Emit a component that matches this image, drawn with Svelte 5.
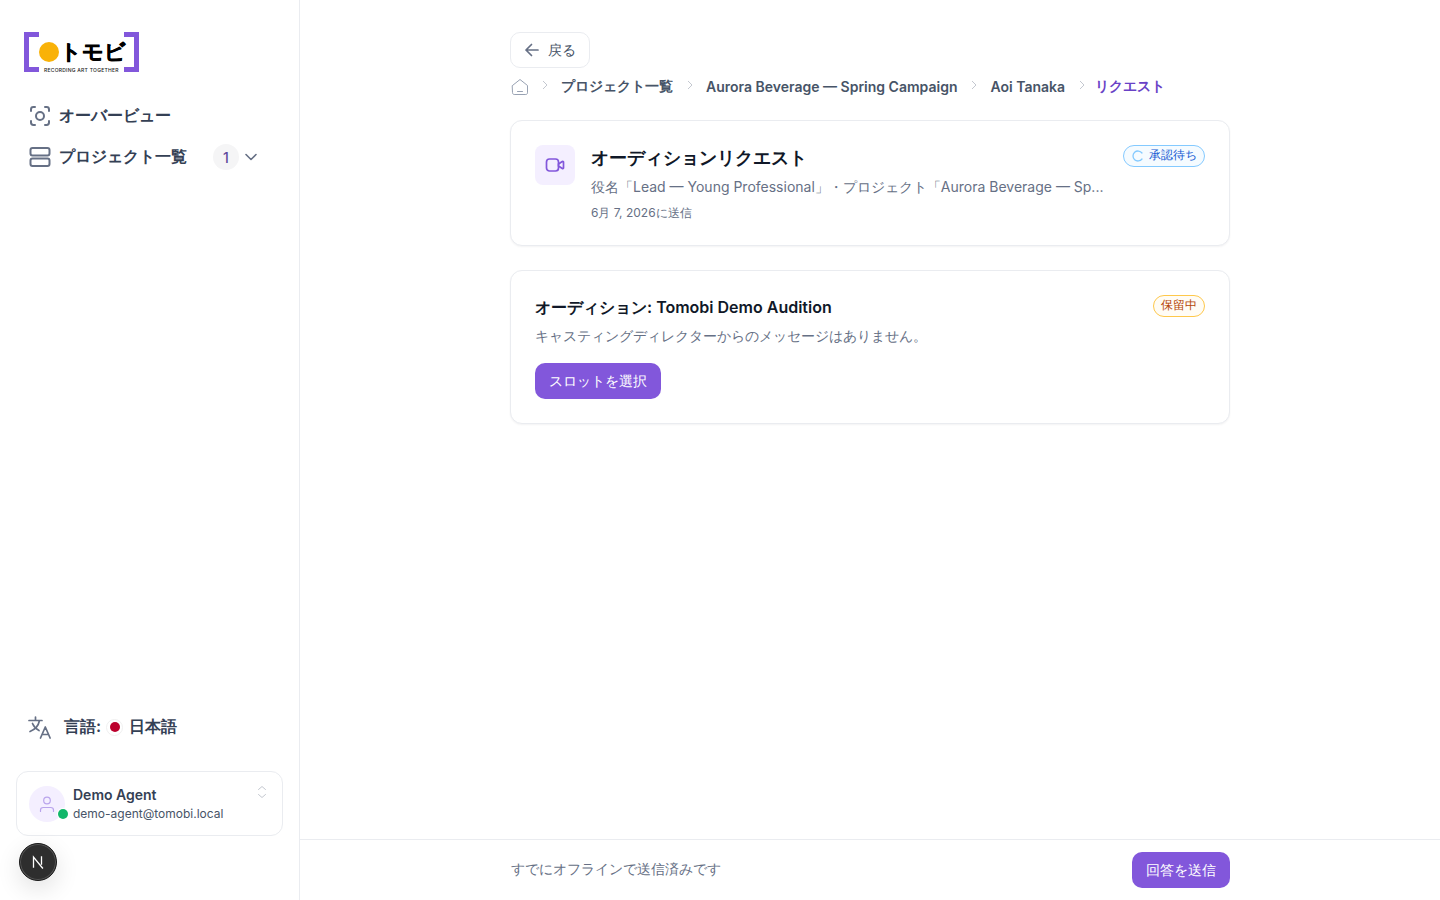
<script>
  let projectCount = 1;
</script>

<div class="layout" lang="ja">
  <aside class="sidebar">
    <div class="logo">
      <span class="bracket left"></span>
      <span class="dot"></span>
      <span class="logo-text">トモビ</span>
      <span class="logo-sub">RECORDING ART TOGETHER</span>
      <span class="bracket right"></span>
    </div>

    <nav class="nav">
      <div class="nav-item">
        <svg width="24" height="24" viewBox="0 0 24 24" fill="none" stroke="#667085" stroke-width="2" stroke-linecap="round" stroke-linejoin="round">
          <path d="M7 3H5.4C4 3 3 4 3 5.4V7M17 3h1.6C20 3 21 4 21 5.4V7M21 17v1.6c0 1.4-1 2.4-2.4 2.4H17M7 21H5.4C4 21 3 20 3 18.6V17" />
          <circle cx="12" cy="12" r="4" />
        </svg>
        <span>オーバービュー</span>
      </div>
      <div class="nav-item">
        <svg width="24" height="24" viewBox="0 0 24 24" fill="none" stroke="#667085" stroke-width="2" stroke-linecap="round" stroke-linejoin="round">
          <rect x="2.5" y="3" width="19" height="7.5" rx="2" />
          <rect x="2.5" y="13.5" width="19" height="7.5" rx="2" />
        </svg>
        <span>プロジェクト一覧</span>
        <span class="count">{projectCount}</span>
        <svg class="chev" width="20" height="20" viewBox="0 0 20 20" fill="none" stroke="#667085" stroke-width="1.6" stroke-linecap="round" stroke-linejoin="round">
          <path d="M5 7.5l5 5 5-5" />
        </svg>
      </div>
    </nav>

    <div class="spacer"></div>

    <div class="lang">
      <svg width="24" height="24" viewBox="0 0 24 24" fill="none" stroke="#667085" stroke-width="1.7" stroke-linecap="round" stroke-linejoin="round">
        <path d="M1 5.500h13M7.500 2v3.500M11.500 5.500c-1 5-4.500 9-9.500 11M4.500 8.500c1.200 3 3.500 5.500 6.500 7" />
        <path d="M12.500 23l4.800-11 4.800 11M14 19.500h6.600" />
      </svg>
      <span class="lang-label">言語:</span>
      <span class="flag"><span></span></span>
      <span class="lang-value">日本語</span>
    </div>

    <div class="user">
      <div class="avatar">
        <svg width="18" height="18" viewBox="0 0 18 18" fill="none" stroke="#b9a4ec" stroke-width="1.200" stroke-linecap="round">
          <circle cx="9" cy="5.500" r="3.300" />
          <path d="M2.500 16.500v-1.500c0-1.500 1.300-2.500 2.800-2.500h7.400c1.500 0 2.800 1 2.800 2.500v1.500" />
        </svg>
        <span class="online"></span>
      </div>
      <div class="user-text">
        <div class="user-name">Demo Agent</div>
        <div class="user-mail">demo-agent@tomobi.local</div>
      </div>
      <svg class="updown" width="10" height="14" viewBox="0 0 10 14" fill="none" stroke="#c4c8d0" stroke-width="1" stroke-linecap="round" stroke-linejoin="round">
        <path d="M1.500 4.500L5 1.500l3.500 3M1.500 9.500L5 12.500l3.500-3" />
      </svg>
    </div>
  </aside>

  <main class="main">
    <div class="scroll">
      <div class="content">
        <button class="back">
          <svg width="18" height="18" viewBox="0 0 18 18" fill="none" stroke="#667085" stroke-width="1.700" stroke-linecap="round" stroke-linejoin="round">
            <path d="M15 9H3M8.500 3.500L3 9l5.500 5.500" />
          </svg>
          戻る
        </button>

        <div class="crumbs">
          <svg class="home" width="18" height="18" viewBox="0 0 18 18" fill="none" stroke="#98a2b3" stroke-width="1" stroke-linecap="round" stroke-linejoin="round">
            <path d="M1.500 7.500L9 1.500l7.500 6v7.300c0 1-.7 1.700-1.700 1.700H3.200c-1 0-1.700-.7-1.700-1.700z" />
            <path d="M6.500 13.500h5" />
          </svg>
          <svg class="sep" width="8" height="10" viewBox="0 0 8 10" fill="none" stroke="#c4c8d0" stroke-width="1"><path d="M2 1l4 4-4 4" /></svg>
          <span class="crumb">プロジェクト一覧</span>
          <svg class="sep" width="8" height="10" viewBox="0 0 8 10" fill="none" stroke="#c4c8d0" stroke-width="1"><path d="M2 1l4 4-4 4" /></svg>
          <span class="crumb">Aurora Beverage — Spring Campaign</span>
          <svg class="sep" width="8" height="10" viewBox="0 0 8 10" fill="none" stroke="#c4c8d0" stroke-width="1"><path d="M2 1l4 4-4 4" /></svg>
          <span class="crumb">Aoi Tanaka</span>
          <svg class="sep" width="8" height="10" viewBox="0 0 8 10" fill="none" stroke="#c4c8d0" stroke-width="1"><path d="M2 1l4 4-4 4" /></svg>
          <span class="crumb current">リクエスト</span>
        </div>

        <section class="card request">
          <div class="video-icon">
            <svg width="20" height="20" viewBox="0 0 20 20" fill="none" stroke="#8257db" stroke-width="1.700" stroke-linecap="round" stroke-linejoin="round">
              <rect x="1.500" y="4" width="12" height="12" rx="3" />
              <path d="M13.500 9l3.800-2.500c.5-.3 1.200 0 1.200.6v5.800c0 .6-.7.900-1.200.6L13.500 11z" />
            </svg>
          </div>
          <div class="request-body">
            <h1>オーディションリクエスト</h1>
            <p class="desc">役名「Lead — Young Professional」・プロジェクト「Aurora Beverage — Sp...</p>
            <p class="date">6月 7, 2026に送信</p>
          </div>
          <span class="badge pending">
            <svg width="12" height="12" viewBox="0 0 12 12" fill="none" stroke="#84caff" stroke-width="1.300" stroke-linecap="round">
              <path d="M10 3a5 5 0 1 0 0 6" />
            </svg>
            承認待ち
          </span>
        </section>

        <section class="card audition">
          <div class="audition-body">
            <h2>オーディション: Tomobi Demo Audition</h2>
            <p class="message">キャスティングディレクターからのメッセージはありません。</p>
            <button class="primary">スロットを選択</button>
          </div>
          <span class="badge hold">保留中</span>
        </section>
      </div>
    </div>

    <footer class="footer">
      <div class="footer-inner">
        <span class="footer-note">すでにオフラインで送信済みです</span>
        <button class="primary">回答を送信</button>
      </div>
    </footer>
  </main>

  <div class="next-badge">
    <svg width="16" height="16" viewBox="0 0 16 16" fill="none" stroke="#fff" stroke-width="1.300" stroke-linecap="square">
      <path d="M3.500 13V3l9 11M11.500 3v7" />
    </svg>
  </div>
</div>

<style>
  :global(body) {
    margin: 0;
    background: #fff;
    font-family: Inter, sans-serif;
    color: #344054;
  }

  .layout {
    display: flex;
    height: 900px;
    overflow: hidden;
    position: relative;
  }

  .sidebar {
    width: 300px;
    box-sizing: border-box;
    border-right: 1px solid #eaecf0;
    padding: 32px 16px 64px;
    display: flex;
    flex-direction: column;
  }

  /* logo */
  .logo {
    position: relative;
    width: 115px;
    height: 40px;
    margin-left: 8px;
  }
  .bracket {
    position: absolute;
    top: 0;
    height: 40px;
    box-sizing: border-box;
    border: 5px solid #8257db;
    width: 15px;
  }
  .bracket.left { left: 0; border-right: 0; }
  .bracket.right { right: 0; border-left: 0; }
  .dot {
    position: absolute;
    left: 15px;
    top: 10px;
    width: 20px;
    height: 20px;
    border-radius: 50%;
    background: #f9b208;
  }
  .logo-text {
    position: absolute;
    left: 36px;
    top: 3px;
    font-size: 21px;
    line-height: 34px;
    font-weight: 900;
    color: #000;
    -webkit-text-stroke: 0.6px #000;
    white-space: nowrap;
  }
  .logo-sub {
    position: absolute;
    left: 19px;
    top: 35px;
    font-size: 5px;
    line-height: 6px;
    font-weight: 500;
    color: #222;
    letter-spacing: 0.25px;
    white-space: nowrap;
    background: #fff;
    padding: 0 1px;
  }

  .nav {
    margin-top: 26px;
    padding: 0 12px;
    display: flex;
    flex-direction: column;
    gap: 5px;
  }
  .nav-item {
    display: flex;
    align-items: center;
    gap: 7px;
    height: 36px;
    font-size: 16px;
    font-weight: 600;
    color: #344054;
  }
  .count {
    margin-left: 19px;
    width: 26px;
    height: 26px;
    border-radius: 50%;
    background: #f5f5f6;
    font-size: 14px;
    font-weight: 500;
    color: #5f4a9c;
    display: flex;
    align-items: center;
    justify-content: center;
  }
  .chev { margin-left: -5px; }

  .spacer { flex: 1; }

  .lang {
    display: flex;
    align-items: center;
    padding-left: 12px;
    height: 32px;
    font-size: 16px;
    font-weight: 600;
    color: #344054;
    margin-bottom: 28px;
  }
  .lang-label { margin-left: 12px; }
  .flag {
    width: 17px;
    height: 17px;
    margin-left: 5px;
    border-radius: 50%;
    border: 1px solid #f0f0f0;
    box-sizing: border-box;
    display: flex;
    align-items: center;
    justify-content: center;
  }
  .flag span {
    width: 10px;
    height: 10px;
    border-radius: 50%;
    background: #bc002d;
  }
  .lang-value { margin-left: 6px; }

  .user {
    position: relative;
    height: 65px;
    box-sizing: border-box;
    border: 1px solid #eaecf0;
    border-radius: 12px;
    padding: 0 12px;
    display: flex;
    align-items: center;
    gap: 8px;
  }
  .avatar {
    position: relative;
    width: 36px;
    height: 36px;
    border-radius: 50%;
    background: #f4efff;
    display: flex;
    align-items: center;
    justify-content: center;
    flex-shrink: 0;
  }
  .online {
    position: absolute;
    right: -3px;
    bottom: 3px;
    width: 10px;
    height: 10px;
    border-radius: 50%;
    background: #12b76a;
    box-shadow: 0 0 0 1px #fff;
  }
  .user-name {
    font-size: 14px;
    font-weight: 600;
    line-height: 20px;
    color: #344054;
  }
  .user-mail {
    font-size: 12px;
    line-height: 18px;
    color: #475467;
  }
  .updown {
    position: absolute;
    right: 15px;
    top: 13px;
  }

  .main {
    flex: 1;
    display: flex;
    flex-direction: column;
    min-width: 0;
  }
  .scroll { flex: 1; }
  .content {
    width: 720px;
    margin: 0 auto;
    padding-top: 32px;
  }

  .back {
    display: inline-flex;
    align-items: center;
    gap: 7px;
    height: 36px;
    width: 80px;
    box-sizing: border-box;
    padding: 0 12px;
    border: 1px solid #eaecf0;
    border-radius: 10px;
    background: #fff;
    font: 500 14px Inter, sans-serif;
    color: #475467;
  }

  .crumbs {
    display: flex;
    align-items: center;
    height: 20px;
    margin-top: 9px;
    font-size: 14px;
    font-weight: 600;
    color: #475467;
  }
  .home { margin: 0 -1px 0 1px; flex-shrink: 0; }
  .sep { margin: 0 12.500px; position: relative; top: -2px; flex-shrink: 0; }
  .crumb { white-space: nowrap; margin-bottom: 2px; }
  .crumb.current { color: #6941c6; margin-left: -3px; }

  .card {
    position: relative;
    border: 1px solid #eaecf0;
    border-radius: 12px;
    background: #fff;
    box-shadow: 0 1px 2px rgba(16, 24, 40, 0.05);
    padding: 24px;
    display: flex;
    align-items: flex-start;
    box-sizing: border-box;
  }
  .request {
    margin-top: 23px;
    height: 126px;
    gap: 16px;
  }
  .audition {
    margin-top: 24px;
    height: 154px;
  }

  .video-icon {
    width: 40px;
    height: 40px;
    border-radius: 8px;
    background: #f4efff;
    display: flex;
    align-items: center;
    justify-content: center;
    flex-shrink: 0;
  }
  .request-body { flex: 1; min-width: 0; }
  h1 {
    margin: -1px 0 0;
    font-size: 18px;
    line-height: 28px;
    font-weight: 600;
    color: #101828;
  }
  .desc {
    margin: 5px 0 0;
    font-size: 14px;
    line-height: 20px;
    color: #667085;
    white-space: nowrap;
  }
  .date {
    margin: 7px 0 0;
    font-size: 12px;
    line-height: 18px;
    color: #667085;
  }

  .badge {
    position: absolute;
    top: 24px;
    right: 24px;
    height: 22px;
    box-sizing: border-box;
    border-radius: 11px;
    padding: 0 7px 2px;
    font-size: 12px;
    display: inline-flex;
    align-items: center;
    gap: 5px;
    white-space: nowrap;
  }
  .badge svg { margin-top: 2px; }
  .pending {
    padding-left: 8px;
    border: 1px solid #84caff;
    background: #f5fbff;
    color: #175cd3;
  }
  .hold {
    border: 1px solid #fec84b;
    background: #fffcf5;
    color: #b54708;
  }

  .audition-body { flex: 1; }
  h2 {
    margin: 0;
    font-size: 16px;
    line-height: 24px;
    font-weight: 600;
    color: #101828;
  }
  .message {
    margin: 7px 0 0;
    font-size: 14px;
    line-height: 20px;
    color: #667085;
  }
  .primary {
    height: 36px;
    padding: 0 14px;
    border: 0;
    border-radius: 10px;
    background: #8257db;
    color: #fff;
    font: 500 14px Inter, sans-serif;
  }
  .audition .primary { margin-top: 17px; }

  .footer {
    height: 61px;
    box-sizing: border-box;
    border-top: 1px solid #eaecf0;
    display: flex;
    align-items: center;
  }
  .footer-inner {
    width: 720px;
    margin: 0 auto;
    display: flex;
    align-items: center;
    justify-content: space-between;
  }
  .footer-note {
    font-size: 14px;
    color: #667085;
    margin-left: 1px;
    margin-bottom: 2px;
  }

  .next-badge {
    position: absolute;
    left: 19px;
    top: 843px;
    width: 38px;
    height: 38px;
    box-sizing: border-box;
    border-radius: 50%;
    background: #2e2e2e;
    border: 1px solid #1a1a1a;
    box-shadow: inset 0 0 0 1px #555, 0 8px 24px rgba(0, 0, 0, 0.12);
    display: flex;
    align-items: center;
    justify-content: center;
  }
</style>
